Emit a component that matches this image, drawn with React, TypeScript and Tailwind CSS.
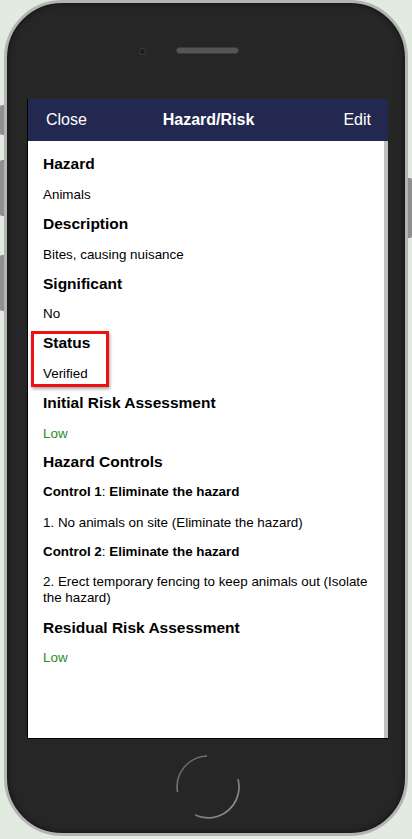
import React from "react"

type Row =
  | { kind: "head"; text: string }
  | { kind: "value"; text: string; green?: boolean }

const rows: Row[] = [
  { kind: "head", text: "Hazard" },
  { kind: "value", text: "Animals" },
  { kind: "head", text: "Description" },
  { kind: "value", text: "Bites, causing nuisance" },
  { kind: "head", text: "Significant" },
  { kind: "value", text: "No" },
  { kind: "head", text: "Status" },
  { kind: "value", text: "Verified" },
  { kind: "head", text: "Initial Risk Assessment" },
  { kind: "value", text: "Low", green: true },
  { kind: "head", text: "Hazard Controls" },
]

function ControlTitle({ n }: { n: number }) {
  return (
    <div className="h-[30px] flex items-center text-[13.4px] text-black">
      <span className="font-bold">Control {n}</span>
      <span>:&nbsp;</span>
      <span className="font-bold">Eliminate the hazard</span>
    </div>
  )
}

function HomeButton() {
  return (
    <svg width="70" height="70" viewBox="0 0 70 70">
      <defs>
        <linearGradient id="hb" x1="0" y1="0" x2="1" y2="1">
          <stop offset="0" stopColor="#555" />
          <stop offset="1" stopColor="#9a9a9a" />
        </linearGradient>
      </defs>
      {/* top-left arc */}
      <path d="M 34 4 A 31 31 0 0 0 4.5 40" fill="none" stroke="url(#hb)" strokeWidth="1.6" />
      {/* bottom-right arc */}
      <path d="M 22 63 A 31 31 0 0 0 65 27" fill="none" stroke="url(#hb)" strokeWidth="1.8" />
    </svg>
  )
}

export default function App() {
  return (
    <div
      className="relative w-[412px] h-[839px] bg-[#e1ebdf] overflow-hidden"
      style={{ fontFamily: '"Liberation Sans", Arial, sans-serif' }}
    >
      {/* side buttons */}
      <div className="absolute left-0 top-[105px] w-[5px] h-[30px] bg-[#8f8f8f] rounded-l-[2px]" />
      <div className="absolute left-0 top-[160px] w-[5px] h-[56px] bg-[#8f8f8f] rounded-l-[2px]" />
      <div className="absolute left-0 top-[255px] w-[5px] h-[56px] bg-[#8f8f8f] rounded-l-[2px]" />
      <div className="absolute right-0 top-[178px] w-[5px] h-[60px] bg-[#8f8f8f] rounded-r-[2px]" />

      <div className="relative ml-[4px] w-[404px] h-[836px] rounded-[58px] border-[3px] border-[#b4b4b4] bg-[#262626] shadow-[inset_0_0_6px_rgba(0,0,0,0.6)] flex flex-col">
        {/* top bezel */}
        <div className="h-[96px] flex items-start pt-[45px]">
          <div className="ml-[132px] w-[7px] h-[7px] rounded-full bg-[#1a1a1a] border border-[#444]" />
          <div className="ml-[30px] mt-[-1px] w-[63px] h-[7px] rounded-full bg-[#555] border border-[#3c3c3c]" />
        </div>

        {/* screen */}
        <div className="ml-[20px] w-[361px] h-[640px] bg-white flex flex-col border-l border-b border-black">
          <div className="h-[42px] bg-[#222850] grid grid-cols-[1fr_auto_1fr] items-center pl-[18px] pr-[17px] text-white text-[16px]">
            <span>Close</span>
            <span className="font-bold">Hazard/Risk</span>
            <span className="text-right">Edit</span>
          </div>
          <div className="relative flex-1 flex">
            <div className="flex-1 pl-[15px] pt-[8px] text-black">
              {rows.map((r, i) =>
                r.kind === "head" ? (
                  <div key={i} className="h-[30px] flex items-center text-[15.5px] font-bold">
                    {r.text}
                  </div>
                ) : (
                  <div
                    key={i}
                    className={`h-[29.6px] pt-[3px] flex items-center text-[13.4px] ${r.green ? "text-[#2a8a2a]" : ""}`}
                  >
                    {r.text}
                  </div>
                )
              )}
              <ControlTitle n={1} />
              <div className="h-[30px] pt-[2px] flex items-center text-[13.4px]">1. No animals on site (Eliminate the hazard)</div>
              <ControlTitle n={2} />
              <div className="py-[7px] text-[13.4px] leading-[16px] pr-[8px]">
                2. Erect temporary fencing to keep animals out (Isolate the hazard)
              </div>
              <div className="h-[30px] flex items-center text-[15.5px] font-bold">Residual Risk Assessment</div>
              <div className="h-[30px] flex items-center text-[13.4px] text-[#2a8a2a]">Low</div>
            </div>
            <div className="w-[4px] bg-[#c1c1c1]" />

            {/* highlight box */}
            <div className="absolute left-[3px] top-[190px] w-[78px] h-[56px] border-[3px] border-[#ee1111] shadow-[1px_2px_3px_rgba(0,0,0,0.35)]" />
          </div>
        </div>

        {/* bottom bezel */}
        <div className="flex-1 flex justify-center pt-[13px]">
          <div className="ml-[4px]">
            <HomeButton />
          </div>
        </div>
      </div>
    </div>
  )
}
